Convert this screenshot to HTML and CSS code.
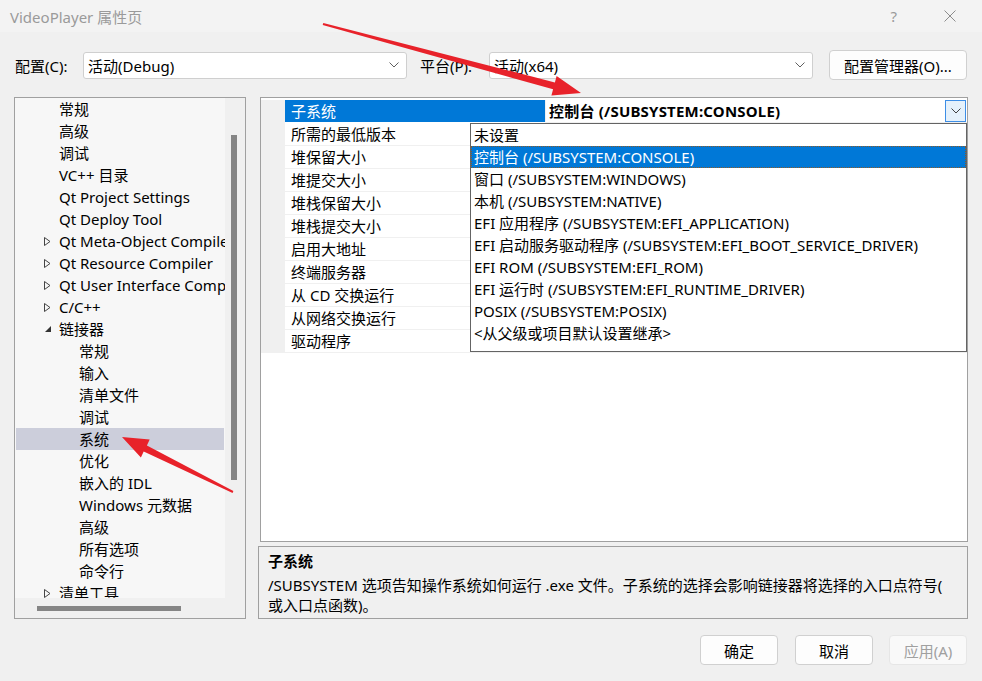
FILE: index.html
```html
<!DOCTYPE html>
<html lang="zh-CN">
<head>
   <meta charset="UTF-8">
   <title>VideoPlayer 属性页</title>
   <link rel="stylesheet" href="styles.css">
</head>
<body>
   <div class="window">
      <div class="titlebar">
         <span class="title">VideoPlayer 属性页</span>
         <span class="help">?</span>
         <svg class="close" width="12" height="12" viewBox="0 0 12 12"><path d="M0.5 0.5 L11.5 11.5 M11.5 0.5 L0.5 11.5" stroke="#8c8c8c" stroke-width="1" fill="none"/></svg>
      </div>

      <div class="config-row">
         <span class="label label-config">配置(C):</span>
         <div class="combo">
            <span>活动(Debug)</span>
            <svg width="10" height="6" viewBox="0 0 10 6"><polyline points="0.5,0.5 5,5 9.5,0.5" stroke="#606060" fill="none"/></svg>
         </div>
         <span class="label label-platform">平台(P):</span>
         <div class="combo">
            <span>活动(x64)</span>
            <svg width="10" height="6" viewBox="0 0 10 6"><polyline points="0.5,0.5 5,5 9.5,0.5" stroke="#606060" fill="none"/></svg>
         </div>
         <button class="btn btn-manager">配置管理器(O)...</button>
      </div>

      <div class="main">
         <div class="tree">
            <div class="tree-top">
               <ul class="tree-list">
                  <li class="lvl1"><i class="exp"></i>常规</li>
                  <li class="lvl1"><i class="exp"></i>高级</li>
                  <li class="lvl1"><i class="exp"></i>调试</li>
                  <li class="lvl1"><i class="exp"></i>VC++ 目录</li>
                  <li class="lvl1"><i class="exp"></i>Qt Project Settings</li>
                  <li class="lvl1"><i class="exp"></i>Qt Deploy Tool</li>
                  <li class="lvl1"><i class="exp"><svg width="7" height="9" viewBox="0 0 7 9"><path d="M0.5 0.5 L6 4.5 L0.5 8.5 Z" stroke="#444" fill="none"/></svg></i>Qt Meta-Object Compiler</li>
                  <li class="lvl1"><i class="exp"><svg width="7" height="9" viewBox="0 0 7 9"><path d="M0.5 0.5 L6 4.5 L0.5 8.5 Z" stroke="#444" fill="none"/></svg></i>Qt Resource Compiler</li>
                  <li class="lvl1"><i class="exp"><svg width="7" height="9" viewBox="0 0 7 9"><path d="M0.5 0.5 L6 4.5 L0.5 8.5 Z" stroke="#444" fill="none"/></svg></i>Qt User Interface Compiler</li>
                  <li class="lvl1"><i class="exp"><svg width="7" height="9" viewBox="0 0 7 9"><path d="M0.5 0.5 L6 4.5 L0.5 8.5 Z" stroke="#444" fill="none"/></svg></i>C/C++</li>
                  <li class="lvl1"><i class="exp"><svg width="8" height="8" viewBox="0 0 8 8"><path d="M7 1 L7 7 L1 7 Z" fill="#333"/></svg></i>链接器</li>
                  <li class="lvl2">常规</li>
                  <li class="lvl2">输入</li>
                  <li class="lvl2">清单文件</li>
                  <li class="lvl2">调试</li>
                  <li class="lvl2 selected">系统</li>
                  <li class="lvl2">优化</li>
                  <li class="lvl2">嵌入的 IDL</li>
                  <li class="lvl2">Windows 元数据</li>
                  <li class="lvl2">高级</li>
                  <li class="lvl2">所有选项</li>
                  <li class="lvl2">命令行</li>
                  <li class="lvl1"><i class="exp"><svg width="7" height="9" viewBox="0 0 7 9"><path d="M0.5 0.5 L6 4.5 L0.5 8.5 Z" stroke="#444" fill="none"/></svg></i>清单工具</li>
               </ul>
               <div class="vscroll"><div class="vthumb"></div></div>
            </div>
            <div class="hscroll"><div class="hthumb"></div></div>
         </div>

         <div class="right">
            <div class="grid">
               <div class="prow">
                  <div class="gutter"></div>
                  <div class="pname active">子系统</div>
                  <div class="pval strong">
                     <span>控制台 (/SUBSYSTEM:CONSOLE)</span>
                     <span class="drop-btn"><svg width="10" height="6" viewBox="0 0 10 6"><polyline points="0.5,0.5 5,5 9.5,0.5" stroke="#404040" fill="none"/></svg></span>
                  </div>
               </div>
               <div class="prow"><div class="gutter"></div><div class="pname">所需的最低版本</div><div class="pval"></div></div>
               <div class="prow"><div class="gutter"></div><div class="pname">堆保留大小</div><div class="pval"></div></div>
               <div class="prow"><div class="gutter"></div><div class="pname">堆提交大小</div><div class="pval"></div></div>
               <div class="prow"><div class="gutter"></div><div class="pname">堆栈保留大小</div><div class="pval"></div></div>
               <div class="prow"><div class="gutter"></div><div class="pname">堆栈提交大小</div><div class="pval"></div></div>
               <div class="prow"><div class="gutter"></div><div class="pname">启用大地址</div><div class="pval"></div></div>
               <div class="prow"><div class="gutter"></div><div class="pname">终端服务器</div><div class="pval"></div></div>
               <div class="prow"><div class="gutter"></div><div class="pname">从 CD 交换运行</div><div class="pval"></div></div>
               <div class="prow"><div class="gutter"></div><div class="pname">从网络交换运行</div><div class="pval"></div></div>
               <div class="prow"><div class="gutter"></div><div class="pname">驱动程序</div><div class="pval"></div></div>

               <ul class="dropdown">
                  <li>未设置</li>
                  <li class="selected">控制台 (/SUBSYSTEM:CONSOLE)</li>
                  <li>窗口 (/SUBSYSTEM:WINDOWS)</li>
                  <li>本机 (/SUBSYSTEM:NATIVE)</li>
                  <li>EFI 应用程序 (/SUBSYSTEM:EFI_APPLICATION)</li>
                  <li>EFI 启动服务驱动程序 (/SUBSYSTEM:EFI_BOOT_SERVICE_DRIVER)</li>
                  <li>EFI ROM (/SUBSYSTEM:EFI_ROM)</li>
                  <li>EFI 运行时 (/SUBSYSTEM:EFI_RUNTIME_DRIVER)</li>
                  <li>POSIX (/SUBSYSTEM:POSIX)</li>
                  <li>&lt;从父级或项目默认设置继承&gt;</li>
               </ul>
            </div>
            <div class="desc">
               <div class="desc-title">子系统</div>
               <div class="desc-text">/SUBSYSTEM 选项告知操作系统如何运行 .exe 文件。子系统的选择会影响链接器将选择的入口点符号(<br>或入口点函数)。</div>
            </div>
         </div>
      </div>

      <div class="buttons">
         <button class="btn">确定</button>
         <button class="btn">取消</button>
         <button class="btn disabled">应用(A)</button>
      </div>

      <svg class="arrows" width="982" height="681" viewBox="0 0 982 681">
         <polygon fill="#e8222a" points="323.3,23 554.9,82.4 556.6,76.1 581,93 551.4,95.5 553.1,89.2 322.7,25"/>
         <polygon fill="#e8222a" points="233.4,491.1 146.9,445.4 149.7,439.5 122,437 140.9,457.5 143.7,451.6 232.6,492.9"/>
      </svg>
   </div>
</body>
</html>
```

FILE: styles.css
```css
* { box-sizing: border-box; }
body {
   margin: 0;
   padding: 0;
   font-family: "Noto Sans", "Noto Sans CJK SC", sans-serif;
   font-size: 15px;
   color: #000;
   background: #f0f0f0;
}
ul { list-style: none; margin: 0; padding: 0; }
.window {
   position: relative;
   width: 982px;
   height: 681px;
   overflow: hidden;
   background: #f0f0f0;
}
.titlebar {
   height: 32px;
   display: flex;
   align-items: center;
   padding-left: 10px;
   background: #f3f3f3;
   color: #9a9a9a;
}
.title { flex: 1; }
.help { margin-right: 47px; font-size: 15px; }
.close { margin-right: 26px; }

.config-row {
   margin-top: 16px;
   height: 34px;
   display: flex;
   align-items: center;
   padding-left: 15px;
}
.label-config { width: 68px; }
.label-platform { width: 69px; margin-left: 13px; }
.combo {
   width: 324px;
   height: 27px;
   display: flex;
   align-items: center;
   justify-content: space-between;
   padding: 0 7px 0 4px;
   background: #fff;
   border: 1px solid #cfcfcf;
   border-radius: 3px;
}
.btn {
   width: 78px;
   height: 30px;
   font-family: inherit;
   font-size: 15px;
   color: #000;
   background: #fdfdfd;
   border: 1px solid #d0d0d0;
   border-radius: 4px;
   padding: 0;
}
.btn-manager { width: 138px; margin-left: 16px; }
.btn.disabled {
   color: #a0a0a0;
   background: #f9f9f9;
   border-color: #e6e6e6;
}

.main {
   margin-top: 15px;
   padding-left: 14px;
   height: 522px;
   display: flex;
}
.tree {
   width: 232px;
   height: 522px;
   border: 1px solid #a0a0a0;
   display: flex;
   flex-direction: column;
}
.tree-top {
   height: 500px;
   display: flex;
}
.tree-list {
   width: 210px;
   height: 500px;
   overflow: hidden;
   background: #f7f7f7;
   white-space: nowrap;
}
.tree-list li {
   height: 22px;
   line-height: 22px;
   overflow: hidden;
}
.tree-list .lvl1 { padding-left: 29px; display: flex; align-items: center; }
.tree-list .lvl2 { padding-left: 64px; }
.tree-list .selected { background: #cccedb; margin: 0 1px; padding-left: 63px; }
.exp {
   width: 15px;
   flex-shrink: 0;
   display: flex;
   align-items: center;
}
.vscroll {
   width: 20px;
   background: #f0f0f0;
   padding-top: 37px;
}
.vthumb {
   width: 6px;
   height: 345px;
   margin-left: 6px;
   background: #858585;
}
.hscroll {
   height: 20px;
   background: #f0f0f0;
   padding: 8px 0 0 22px;
}
.hthumb {
   width: 144px;
   height: 5px;
   background: #858585;
}

.right {
   margin-left: 12px;
   width: 710px;
   display: flex;
   flex-direction: column;
}
.grid {
   position: relative;
   margin-left: 2px;
   height: 448px;
   background: #fff;
   border: 1px solid #a0a0a0;
   padding-top: 2px;
}
.prow {
   display: flex;
   height: 23px;
}
.gutter {
   width: 24px;
   background: #f0f0f0;
}
.pname {
   width: 261px;
   height: 23px;
   line-height: 22px;
   padding-left: 6px;
   border-bottom: 1px solid #f0f0f0;
   border-right: 1px solid #f0f0f0;
}
.pname.active {
   background: #0078d7;
   color: #fff;
   border-bottom-color: #fff;
}
.pval {
   flex: 1;
   height: 23px;
   line-height: 22px;
   padding-left: 3px;
   border-bottom: 1px solid #f0f0f0;
   display: flex;
   justify-content: space-between;
}
.pval.strong { font-weight: bold; letter-spacing: 0.2px; }
.drop-btn {
   width: 21px;
   height: 22px;
   margin-right: 1px;
   display: flex;
   align-items: center;
   justify-content: center;
   background: #e5f1fb;
   border: 1px solid #3d8ee6;
}
.dropdown {
   position: absolute;
   left: 209px;
   top: 25px;
   width: 497px;
   height: 229px;
   background: #fff;
   border: 1px solid #646464;
   white-space: nowrap;
}
.dropdown li {
   height: 22px;
   line-height: 22px;
   padding-left: 3px;
}
.dropdown .selected {
   background: #0078d7;
   color: #fff;
   outline: 1px dotted #8a5a2a;
   outline-offset: -1px;
}

.desc {
   margin-top: 4px;
   height: 73px;
   border: 1px solid #a0a0a0;
   background: #f0f0f0;
   padding: 3px 9px 0 9px;
   white-space: nowrap;
}
.desc-title {
   height: 22px;
   line-height: 22px;
   font-weight: bold;
}
.desc-text {
   margin-top: 3px;
   line-height: 20px;
}

.buttons {
   margin-top: 16px;
   display: flex;
   justify-content: flex-end;
   gap: 17px;
   padding-right: 15px;
}
.buttons .btn:last-child { margin-left: -1px; }

.arrows {
   position: absolute;
   left: 0;
   top: 0;
   pointer-events: none;
}
```
